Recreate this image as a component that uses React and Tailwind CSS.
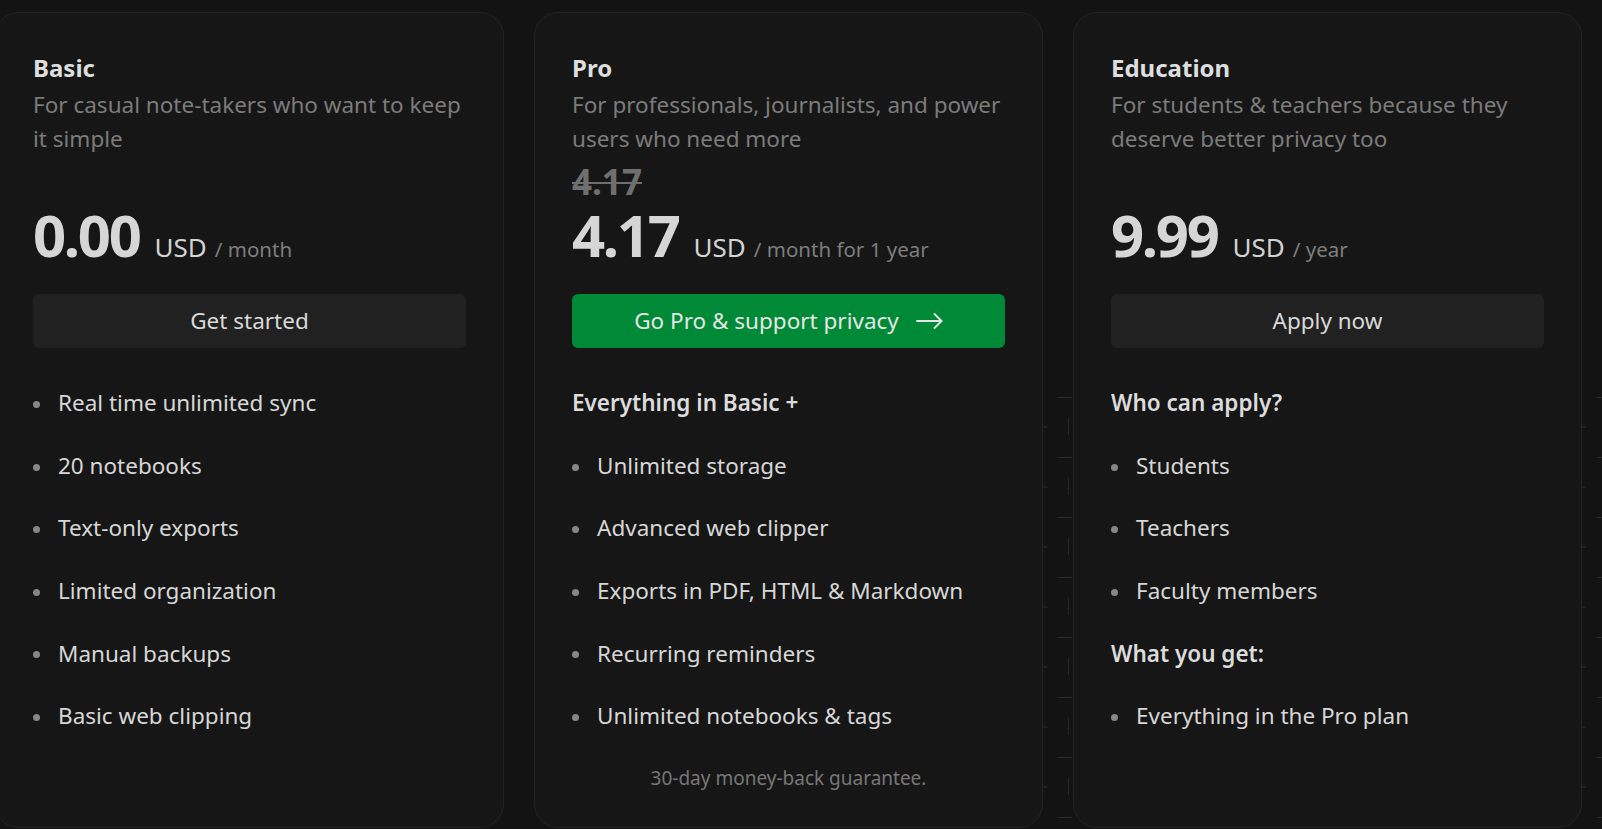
const plans = [
  {
    name: 'Basic',
    description: 'For casual note-takers who want to keep it simple',
    price: '0.00',
    period: '/ month',
    cta: 'Get started',
    rows: [
      { text: 'Real time unlimited sync' },
      { text: '20 notebooks' },
      { text: 'Text-only exports' },
      { text: 'Limited organization' },
      { text: 'Manual backups' },
      { text: 'Basic web clipping' },
    ],
  },
  {
    name: 'Pro',
    description: 'For professionals, journalists, and power users who need more',
    oldPrice: '4.17',
    price: '4.17',
    period: '/ month for 1 year',
    cta: 'Go Pro & support privacy',
    featured: true,
    rows: [
      { text: 'Everything in Basic +', heading: true },
      { text: 'Unlimited storage' },
      { text: 'Advanced web clipper' },
      { text: 'Exports in PDF, HTML & Markdown' },
      { text: 'Recurring reminders' },
      { text: 'Unlimited notebooks & tags' },
    ],
    note: '30-day money-back guarantee.',
  },
  {
    name: 'Education',
    description: 'For students & teachers because they deserve better privacy too',
    price: '9.99',
    period: '/ year',
    cta: 'Apply now',
    rows: [
      { text: 'Who can apply?', heading: true },
      { text: 'Students' },
      { text: 'Teachers' },
      { text: 'Faculty members' },
      { text: 'What you get:', heading: true },
      { text: 'Everything in the Pro plan' },
    ],
  },
];

const ticks = [0, 1, 2, 3, 4, 5, 6, 7];

function ArrowIcon() {
  return (
    <svg width="27" height="16" viewBox="0 0 27 16" fill="none" stroke="currentColor" strokeWidth="1.8" strokeLinecap="round" strokeLinejoin="round">
      <path d="M1 8H25.5" />
      <path d="M18.5 1L25.5 8L18.5 15" />
    </svg>
  );
}

// faint ruler marks sitting in the gaps between cards
function Ruler() {
  return (
    <svg className="pointer-events-none absolute inset-0" width="1602" height="829">
      {[1058, 1597].map((x) => (
        <g key={x}>
          {ticks.map((i) => (
            <line key={i} x1={x} x2={x + 14} y1={397.5 + i * 60} y2={397.5 + i * 60} stroke="#2c2c2c" strokeWidth="1" />
          ))}
          {ticks.slice(0, 7).map((i) => (
            <line key={'d' + i} x1={x + 10.5} x2={x + 10.5} y1={418 + i * 60} y2={435 + i * 60} stroke="#282828" strokeWidth="1" />
          ))}
        </g>
      ))}
      {[1043, 1582].map((x) =>
        ticks.slice(0, 7).map((i) => (
          <line key={x + '-' + i} x1={x} x2={x + 4} y1={427 + i * 60} y2={427 + i * 60} stroke="#303030" strokeWidth="1" />
        ))
      )}
    </svg>
  );
}

function PlanCard({ plan }) {
  return (
    <article className="relative flex h-[816px] w-[509px] shrink-0 flex-col rounded-[24px] border border-[#232323] bg-[#161616] px-[37px] pt-[37px]">
      <h3 className="text-[24px] leading-[36px] font-bold text-[#dedede]">{plan.name}</h3>
      <p className="mt-[2px] text-[22.5px] leading-[33.6px] text-[#7b7b7b]">{plan.description}</p>

      <div className={`mt-[10px] text-[35px] leading-[34px] font-bold text-[#6f6f6f] line-through decoration-2 ${plan.oldPrice ? '' : 'invisible'}`}>
        {plan.oldPrice || '0.00'}
      </div>

      <div className="mt-[7px] flex items-baseline">
        <span className="text-[58px] leading-[58px] font-bold tracking-[-0.04em] text-[#d6d6d6]">{plan.price}</span>
        <span className="ml-[15px] text-[26px] leading-none text-[#d2d2d2]">USD</span>
        <span className="ml-[8px] text-[20.5px] leading-none text-[#7d7d7d]">{plan.period}</span>
      </div>

      {plan.featured ? (
        <button
          type="button"
          className="mt-[30px] flex h-[54px] w-full items-center justify-center gap-[17px] rounded-[6px] bg-[#008936] text-[22.5px] text-[#e6e6e6]"
        >
          {plan.cta}
          <ArrowIcon />
        </button>
      ) : (
        <button
          type="button"
          className="mt-[30px] flex h-[54px] w-full items-center justify-center rounded-[6px] bg-[#212121] text-[22.5px] text-[#d9d9d9]"
        >
          {plan.cta}
        </button>
      )}

      <ul className="mt-[38px] flex flex-col gap-[29px]">
        {plan.rows.map((row) =>
          row.heading ? (
            <li key={row.text} className="text-[22.5px] leading-[33.6px] font-semibold text-[#dcdcdc]">
              {row.text}
            </li>
          ) : (
            <li key={row.text} className="flex items-center gap-[18px] text-[22.5px] leading-[33.6px] text-[#d6d6d6]">
              <span className="mt-[3px] h-[7px] w-[7px] shrink-0 rounded-full bg-[#868686]" />
              {row.text}
            </li>
          )
        )}
      </ul>

      {plan.note && (
        <p className="mt-[31px] text-center text-[19px] leading-[28px] text-[#777777]">{plan.note}</p>
      )}
    </article>
  );
}

export default function App() {
  return (
    <div className="relative h-[829px] w-full overflow-hidden bg-[#131313] font-['Noto_Sans',sans-serif]">
      <Ruler />
      <div className="ml-[-5px] flex gap-[30px] pt-[12px]">
        {plans.map((plan) => (
          <PlanCard key={plan.name} plan={plan} />
        ))}
      </div>
    </div>
  );
}
